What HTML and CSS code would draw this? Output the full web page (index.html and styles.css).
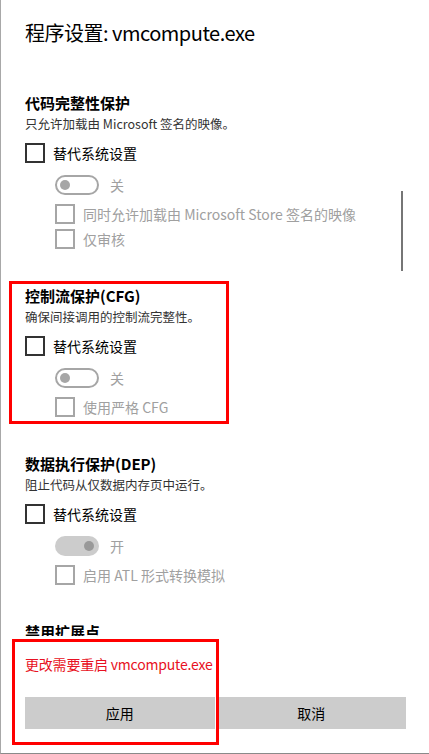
FILE: index.html
```html
<!DOCTYPE html>
<html lang="zh-CN">
<head>
<meta charset="utf-8">
<title>程序设置</title>
<link rel="stylesheet" href="styles.css">
</head>
<body>
<div class="window">
  <div class="scroll">
    <h1 class="title">程序设置: vmcompute.exe</h1>

    <section class="section">
      <h2 class="heading">代码完整性保护</h2>
      <p class="desc">只允许加载由 Microsoft 签名的映像。</p>
      <div class="row main"><span class="box"></span><span class="label">替代系统设置</span></div>
      <div class="row toggle-row"><span class="toggle off"><span class="knob"></span></span><span class="label dim toggle-label">关</span></div>
      <div class="row sub first"><span class="box dimbox"></span><span class="label dim">同时允许加载由 Microsoft Store 签名的映像</span></div>
      <div class="row sub"><span class="box dimbox"></span><span class="label dim">仅审核</span></div>
    </section>

    <section class="section">
      <h2 class="heading">控制流保护(CFG)</h2>
      <p class="desc">确保间接调用的控制流完整性。</p>
      <div class="row main"><span class="box"></span><span class="label">替代系统设置</span></div>
      <div class="row toggle-row"><span class="toggle off"><span class="knob"></span></span><span class="label dim toggle-label">关</span></div>
      <div class="row sub first"><span class="box dimbox"></span><span class="label dim">使用严格 CFG</span></div>
    </section>

    <section class="section">
      <h2 class="heading">数据执行保护(DEP)</h2>
      <p class="desc">阻止代码从仅数据内存页中运行。</p>
      <div class="row main"><span class="box"></span><span class="label">替代系统设置</span></div>
      <div class="row toggle-row"><span class="toggle on"><span class="knob"></span></span><span class="label dim toggle-label">开</span></div>
      <div class="row sub first"><span class="box dimbox"></span><span class="label dim">启用 ATL 形式转换模拟</span></div>
    </section>

    <section class="section">
      <h2 class="heading">禁用扩展点</h2>
    </section>

    <div class="scrollbar"></div>
  </div>

  <div class="footer">
    <p class="warning">更改需要重启 vmcompute.exe</p>
    <div class="buttons">
      <button class="btn">应用</button>
      <button class="btn">取消</button>
    </div>
  </div>

  <div class="mark mark-cfg"></div>
  <div class="mark mark-footer"></div>
</div>
</body>
</html>
```

FILE: styles.css
```css
* { box-sizing: border-box; }

html, body {
  margin: 0;
  padding: 0;
  background: #ffffff;
}

body {
  font-family: "Noto Sans CJK SC", "Noto Sans", sans-serif;
  color: #000;
}

.window {
  position: relative;
  width: 429px;
  height: 754px;
  border-left: 1px solid #a8a8a8;
  border-bottom: 1px solid #8a8a8a;
  display: flex;
  flex-direction: column;
  overflow: hidden;
  background: #fff;
}

.scroll {
  position: relative;
  height: 636px;
  flex: none;
  overflow: hidden;
  padding: 19px 24px 0 24px;
}

.title {
  margin: 0;
  font-size: 20px;
  font-weight: 400;
  line-height: 28px;
  height: 28px;
  color: #000;
  letter-spacing: -0.5px;
}

.section {
  margin-top: 37px;
}

.section:first-of-type {
  margin-top: 46px;
}

.heading {
  margin: 0;
  font-size: 15px;
  font-weight: 700;
  line-height: 20px;
  height: 20px;
}

.desc {
  margin: 1px 0 0;
  font-size: 12.5px;
  line-height: 20px;
  color: #333;
}

.row {
  display: flex;
  align-items: center;
  height: 20px;
}

.row.main { margin-top: 9px; }
.row.toggle-row { margin-top: 12px; padding-left: 30px; }
.row.sub { margin-top: 5px; padding-left: 30px; }
.row.sub.first { margin-top: 9px; }

.box {
  width: 20px;
  height: 20px;
  border: 2px solid #333;
  flex: none;
  margin-right: 8px;
}

.box.dimbox {
  border-color: #a6a6a6;
}

.label {
  font-size: 14px;
  line-height: 20px;
  color: #000;
  white-space: nowrap;
}

.label.dim {
  color: #a0a0a0;
}

.toggle {
  position: relative;
  width: 44px;
  height: 20px;
  border-radius: 10px;
  flex: none;
  margin-right: 11px;
}

.toggle.off {
  border: 2px solid #a6a6a6;
}

.toggle.on {
  background: #cccccc;
}

.knob {
  position: absolute;
  top: 50%;
  width: 10px;
  height: 10px;
  margin-top: -5px;
  border-radius: 50%;
  background: #a6a6a6;
}

.toggle.off .knob { left: 3px; }
.toggle.on .knob { right: 5px; background: #999; }

.scrollbar {
  position: absolute;
  left: 400px;
  top: 191px;
  width: 2px;
  height: 80px;
  background: #767676;
}

.footer {
  flex: 1;
  background: #fff;
  padding: 18px 23px 0 24px;
}

.warning {
  margin: 0;
  font-size: 14px;
  line-height: 20px;
  color: #e81123;
  letter-spacing: -0.2px;
}

.buttons {
  display: flex;
  gap: 2px;
  margin-top: 23px;
}

.btn {
  flex: 1;
  height: 32px;
  border: none;
  background: #cccccc;
  font-family: "Noto Sans CJK SC", "Noto Sans", sans-serif;
  font-size: 14px;
  color: #000;
  padding: 0;
}

.mark {
  position: absolute;
  border: 3px solid #ff0000;
  pointer-events: none;
}

.mark-cfg {
  left: 8px;
  top: 281px;
  width: 220px;
  height: 143px;
}

.mark-footer {
  left: 11px;
  top: 639px;
  width: 207px;
  height: 106px;
}
```
